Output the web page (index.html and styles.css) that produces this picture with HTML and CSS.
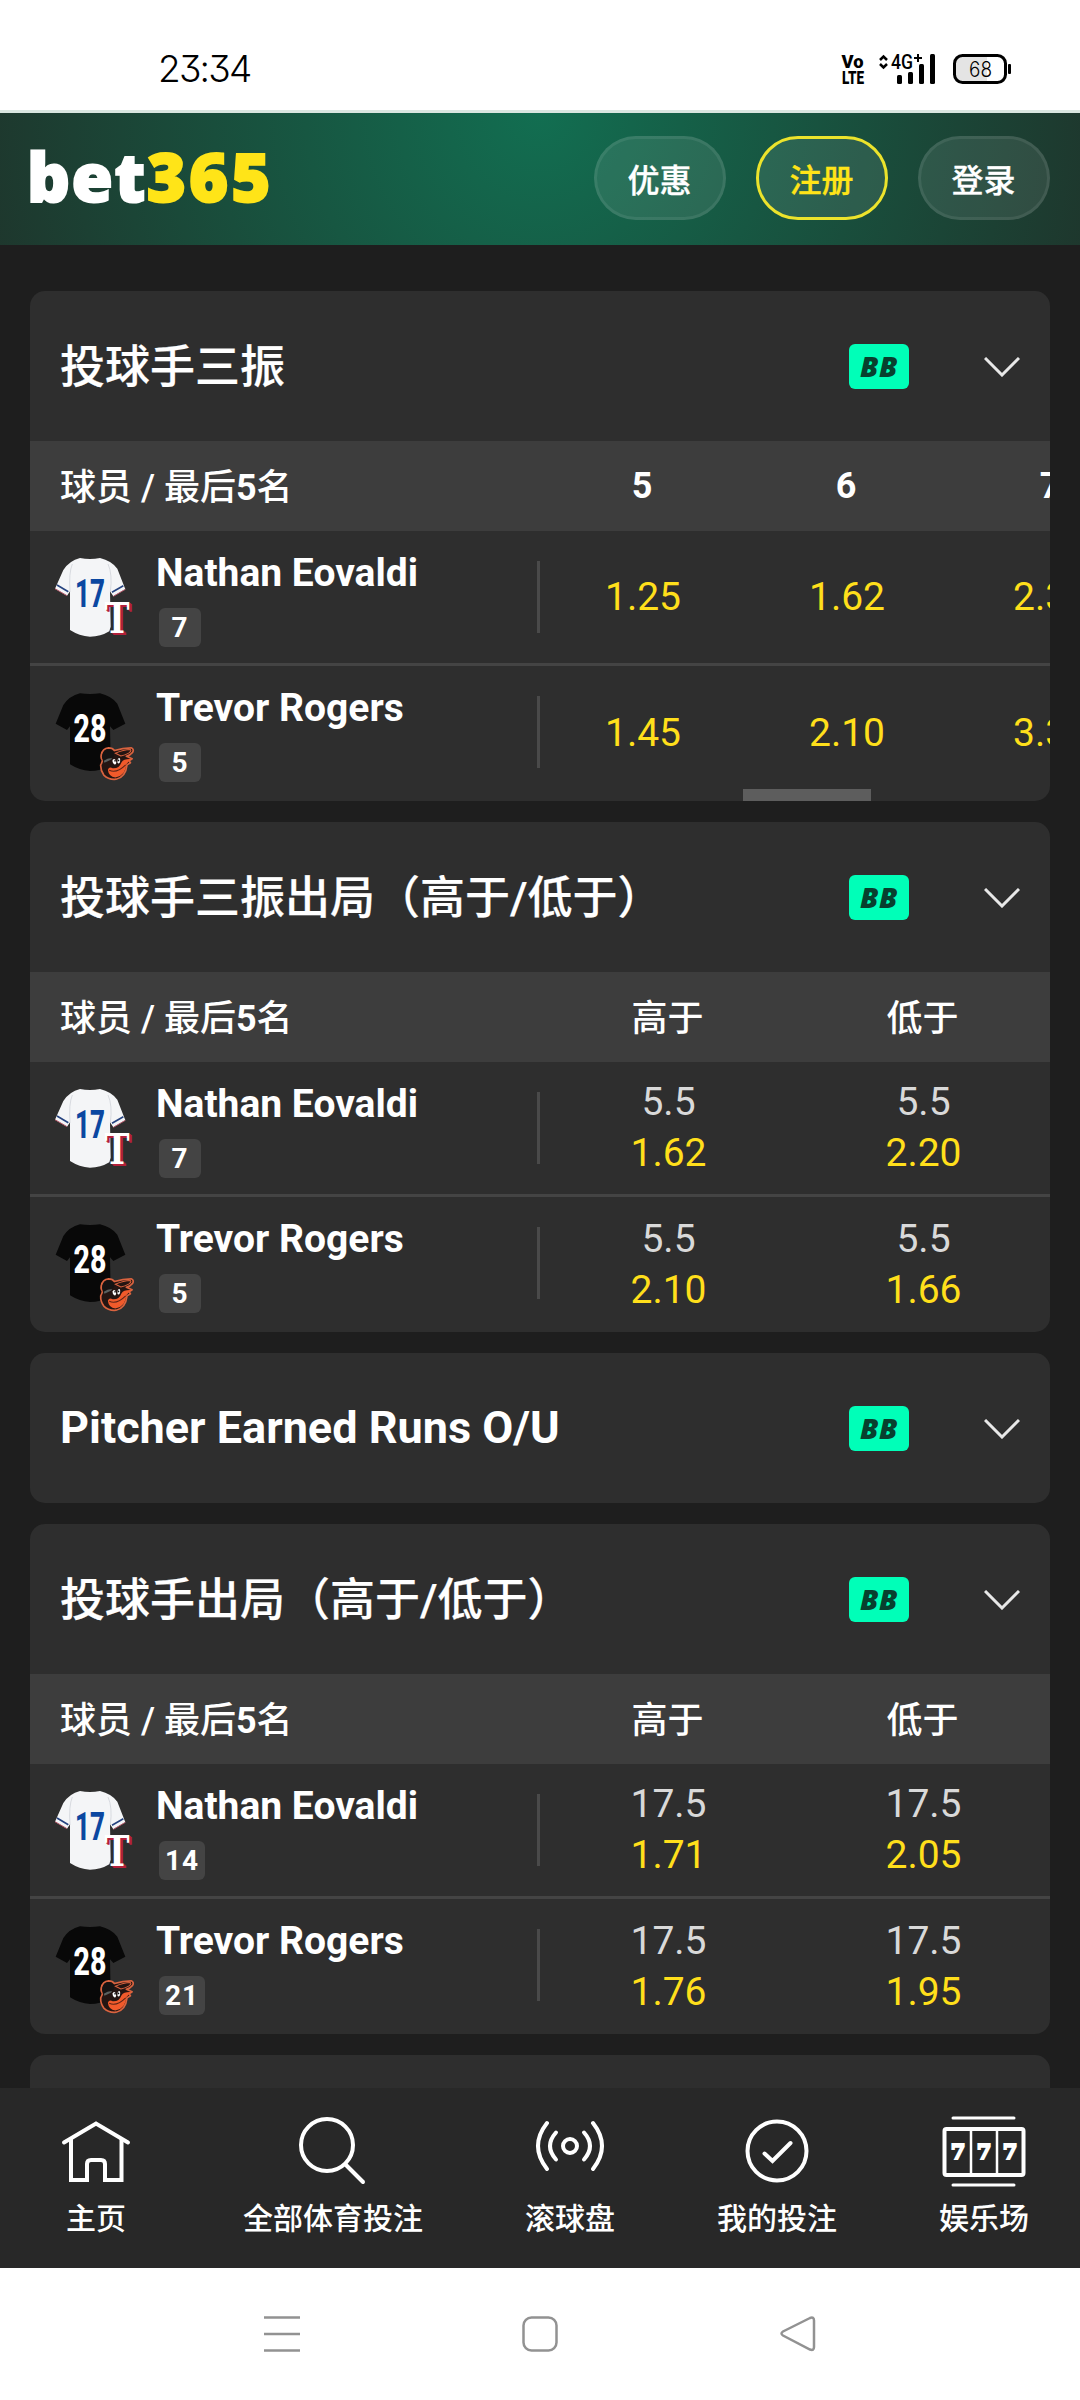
FILE: index.html
```html
<!DOCTYPE html>
<html lang="zh-CN">
<head>
    <meta charset="UTF-8">
    <meta name="viewport" content="width=device-width, initial-scale=1.0">
    <title>bet365</title>
    <link rel="stylesheet" href="styles.css">
</head>
<body>

    <!-- shared icons -->
    <svg class="sprite">
        <symbol id="chevron" viewBox="0 0 36 20">
            <path d="M1 1 L18 18 L35 1" fill="none" stroke="#e8e8e8" stroke-width="3"/>
        </symbol>
        <symbol id="jersey-white" viewBox="0 0 252 252">
            <path d="M78 6 Q108 12 138 6 Q172 14 190 38 L214 100 L178 121 L168 106 L170 212 L166 226 Q140 242 108 242 Q76 240 48 222 L48 106 L39 119 L3 98 L28 42 Q46 14 78 6 Z" fill="#f4f5f7"/>
            <path d="M55 24 Q44 50 48 108 M162 24 Q176 54 169 108" fill="none" stroke="#c9ccd3" stroke-width="2"/>
            <path d="M9 87 L43 107 M208 89 L174 109" stroke="#26437f" stroke-width="5"/>
            <path d="M3 98 L39 119 M214 100 L178 121" stroke="#b5596a" stroke-width="3"/>
        </symbol>
        <symbol id="jersey-black" viewBox="0 0 252 252">
            <path d="M78 7 Q108 11 138 7 Q172 15 190 38 L214 98 L178 117 L168 106 L170 212 L166 226 Q140 240 108 240 Q76 238 48 220 L48 106 L39 117 L5 98 L28 42 Q46 15 78 7 Z" fill="#080808"/>
        </symbol>
        <symbol id="oriole" viewBox="0 0 120 100">
            <path d="M7 24 Q10 6 28 4 Q40 4 45 12 Q70 4 94 4 Q104 8 98 18 Q92 26 80 29 L97 36 L88 42 L92 48 L82 54 Q78 90 50 96 Q28 98 14 84 Q4 70 5 54 Q10 46 10 40 Q4 34 7 24 Z" fill="#241512" stroke="#d9633f" stroke-width="5" stroke-linejoin="round"/>
            <path d="M10 24 Q14 9 28 8 Q40 10 44 18 Q46 26 42 32 Q26 34 12 44 Q8 34 10 24 Z" fill="#151313"/>
            <path d="M48 20 Q72 9 92 9 Q96 13 88 19 Q76 26 64 28 Z" fill="#241512" stroke="#d9633f" stroke-width="3"/>
            <path d="M66 46 Q72 36 94 37 L80 52 Q78 86 48 91 Q28 88 26 68 Q30 58 40 64 Q58 66 66 46 Z" fill="#f15a2b"/>
            <path d="M30 70 Q52 80 78 54" fill="none" stroke="#5c2416" stroke-width="3"/>
            <path d="M14 42 Q24 34 38 34 L36 38 L16 48 Z" fill="#59605f"/>
            <ellipse cx="45" cy="45" rx="5" ry="8" transform="rotate(-18 45 45)" fill="#ffffff"/>
            <ellipse cx="58" cy="42" rx="4" ry="8" transform="rotate(8 58 42)" fill="#ffffff"/>
            <circle cx="47" cy="42" r="2.500" fill="#111111"/>
            <circle cx="57" cy="41" r="2.500" fill="#111111"/>
        </symbol>
    </svg>

    <div class="status-bar">
        <div class="clock">23:34</div>
        <svg class="status-icons" viewBox="0 -6 172 42">
            <text class="volte" x="1.500" y="14" textLength="22" lengthAdjust="spacingAndGlyphs">Vo</text>
            <text class="volte" x="2" y="30" textLength="22" lengthAdjust="spacingAndGlyphs">LTE</text>
            <path d="M40 6 L43.500 2.500 L47 6 M40 10 L43.500 13.500 L47 10" fill="none" stroke="#000" stroke-width="2.500"/>
            <text class="network" x="51" y="15" textLength="22" lengthAdjust="spacingAndGlyphs">4G</text>
            <path d="M74 4 H82 M78 0 V8" stroke="#000" stroke-width="2"/>
            <rect x="57" y="21" width="5" height="9" rx="1.500"/>
            <rect x="68" y="18" width="5" height="12" rx="1.500"/>
            <rect x="79" y="10" width="5" height="20" rx="1.500"/>
            <rect x="90" y="0" width="5" height="30" rx="1.500"/>
            <path d="M121 1.500 H147 V28.500 H121 Q114.500 28.500 114.500 22 V8 Q114.500 1.500 121 1.500 Z" fill="#e4e4e4"/>
            <rect x="114.500" y="1.500" width="51" height="27" rx="8" fill="none" stroke="#000" stroke-width="3"/>
            <rect x="168" y="10" width="3" height="10" rx="1"/>
            <text class="battery-level" x="129" y="22.500" textLength="23" lengthAdjust="spacingAndGlyphs">68</text>
        </svg>
    </div>

    <div class="header">
        <div class="logo"><span class="logo-bet">bet</span><span class="logo-365">365</span></div>
        <div class="header-buttons">
            <div class="pill">优惠</div>
            <div class="pill pill-join">注册</div>
            <div class="pill">登录</div>
        </div>
    </div>

    <div class="markets">

        <div class="market">
            <div class="market-title">
                <div class="market-name">投球手三振</div>
                <div class="bet-builder">BB</div>
                <svg class="chevron"><use href="#chevron"/></svg>
            </div>
            <div class="columns">
                <div class="column-player">球员 / 最后<b>5</b>名</div>
                <div class="column column-narrow"><b>5</b></div>
                <div class="column column-narrow"><b>6</b></div>
                <div class="column column-narrow"><b>7</b></div>
            </div>
            <div class="row">
                <div class="player">
                    <div class="jersey">
                        <svg class="jersey-shirt"><use href="#jersey-white"/></svg>
                        <span class="jersey-number number-blue">17</span>
                        <span class="team-letter">T</span>
                    </div>
                    <div class="player-info">
                        <div class="player-name">Nathan Eovaldi</div>
                        <div class="last-five">7</div>
                    </div>
                </div>
                <div class="cell cell-narrow"><div class="odds">1.25</div></div>
                <div class="cell cell-narrow"><div class="odds">1.62</div></div>
                <div class="cell cell-narrow"><div class="odds">2.30</div></div>
            </div>
            <div class="row">
                <div class="player">
                    <div class="jersey">
                        <svg class="jersey-shirt"><use href="#jersey-black"/></svg>
                        <span class="jersey-number">28</span>
                        <svg class="team-bird"><use href="#oriole"/></svg>
                    </div>
                    <div class="player-info">
                        <div class="player-name">Trevor Rogers</div>
                        <div class="last-five">5</div>
                    </div>
                </div>
                <div class="cell cell-narrow"><div class="odds">1.45</div></div>
                <div class="cell cell-narrow"><div class="odds">2.10</div></div>
                <div class="cell cell-narrow"><div class="odds">3.30</div></div>
            </div>
            <div class="scroll-thumb"></div>
        </div>

        <div class="market">
            <div class="market-title">
                <div class="market-name">投球手三振出局（高于/低于）</div>
                <div class="bet-builder">BB</div>
                <svg class="chevron"><use href="#chevron"/></svg>
            </div>
            <div class="columns">
                <div class="column-player">球员 / 最后<b>5</b>名</div>
                <div class="column">高于</div>
                <div class="column">低于</div>
            </div>
            <div class="row">
                <div class="player">
                    <div class="jersey">
                        <svg class="jersey-shirt"><use href="#jersey-white"/></svg>
                        <span class="jersey-number number-blue">17</span>
                        <span class="team-letter">T</span>
                    </div>
                    <div class="player-info">
                        <div class="player-name">Nathan Eovaldi</div>
                        <div class="last-five">7</div>
                    </div>
                </div>
                <div class="cell"><div class="line">5.5</div><div class="odds">1.62</div></div>
                <div class="cell"><div class="line">5.5</div><div class="odds">2.20</div></div>
            </div>
            <div class="row">
                <div class="player">
                    <div class="jersey">
                        <svg class="jersey-shirt"><use href="#jersey-black"/></svg>
                        <span class="jersey-number">28</span>
                        <svg class="team-bird"><use href="#oriole"/></svg>
                    </div>
                    <div class="player-info">
                        <div class="player-name">Trevor Rogers</div>
                        <div class="last-five">5</div>
                    </div>
                </div>
                <div class="cell"><div class="line">5.5</div><div class="odds">2.10</div></div>
                <div class="cell"><div class="line">5.5</div><div class="odds">1.66</div></div>
            </div>
        </div>

        <div class="market">
            <div class="market-title">
                <div class="market-name market-name-latin">Pitcher Earned Runs O/U</div>
                <div class="bet-builder">BB</div>
                <svg class="chevron"><use href="#chevron"/></svg>
            </div>
        </div>

        <div class="market">
            <div class="market-title">
                <div class="market-name">投球手出局（高于/低于）</div>
                <div class="bet-builder">BB</div>
                <svg class="chevron"><use href="#chevron"/></svg>
            </div>
            <div class="columns">
                <div class="column-player">球员 / 最后<b>5</b>名</div>
                <div class="column">高于</div>
                <div class="column">低于</div>
            </div>
            <div class="row">
                <div class="player">
                    <div class="jersey">
                        <svg class="jersey-shirt"><use href="#jersey-white"/></svg>
                        <span class="jersey-number number-blue">17</span>
                        <span class="team-letter">T</span>
                    </div>
                    <div class="player-info">
                        <div class="player-name">Nathan Eovaldi</div>
                        <div class="last-five">14</div>
                    </div>
                </div>
                <div class="cell"><div class="line">17.5</div><div class="odds">1.71</div></div>
                <div class="cell"><div class="line">17.5</div><div class="odds">2.05</div></div>
            </div>
            <div class="row">
                <div class="player">
                    <div class="jersey">
                        <svg class="jersey-shirt"><use href="#jersey-black"/></svg>
                        <span class="jersey-number">28</span>
                        <svg class="team-bird"><use href="#oriole"/></svg>
                    </div>
                    <div class="player-info">
                        <div class="player-name">Trevor Rogers</div>
                        <div class="last-five">21</div>
                    </div>
                </div>
                <div class="cell"><div class="line">17.5</div><div class="odds">1.76</div></div>
                <div class="cell"><div class="line">17.5</div><div class="odds">1.95</div></div>
            </div>
        </div>

        <div class="market market-next"></div>
    </div>

    <div class="tab-bar">
        <div class="tab">
            <svg class="tab-icon" viewBox="0 0 84 84">
                <path d="M10 33.500 L42 14.500 L74 33.500" stroke-linecap="round"/>
                <path d="M17 30 V71 H33 V55 Q33 51 37 51 H47 Q51 51 51 55 V71 H67.500 V30"/>
            </svg>
            <div class="tab-label">主页</div>
        </div>
        <div class="tab">
            <svg class="tab-icon" viewBox="0 0 84 84">
                <circle cx="36" cy="36" r="26"/>
                <path d="M55 56 L72 73" stroke-linecap="round"/>
            </svg>
            <div class="tab-label">全部体育投注</div>
        </div>
        <div class="tab">
            <svg class="tab-icon" viewBox="0 0 84 84" stroke-linecap="round">
                <circle cx="42" cy="37" r="7"/>
                <path d="M56 23.500 Q68 37 56 50.500 M28 23.500 Q16 37 28 50.500"/>
                <path d="M65 14 Q83 37 65 60 M19 14 Q1 37 19 60"/>
            </svg>
            <div class="tab-label">滚球盘</div>
        </div>
        <div class="tab">
            <svg class="tab-icon" viewBox="0 0 84 84" stroke-linecap="round">
                <circle cx="42" cy="42" r="29.500"/>
                <path d="M29.500 44.500 L37.500 52 L55.500 34"/>
            </svg>
            <div class="tab-label">我的投注</div>
        </div>
        <div class="tab">
            <svg class="tab-icon" viewBox="0 0 84 84">
                <rect x="2.500" y="20" width="79" height="46" rx="2"/>
                <path d="M29 20 V66 M55 20 V66" stroke-width="2.500"/>
                <path d="M11 9 H72 M11 76 H72" stroke-width="3" stroke-linecap="round"/>
                <text class="slot-seven" x="16" y="50">7</text>
                <text class="slot-seven" x="42" y="50">7</text>
                <text class="slot-seven" x="68" y="50">7</text>
            </svg>
            <div class="tab-label">娱乐场</div>
        </div>
    </div>

    <div class="system-nav">
        <svg class="nav-icon" viewBox="0 0 36 36"><path d="M0 1.500 H36 M0 18 H36 M0 34.500 H36"/></svg>
        <svg class="nav-icon" viewBox="0 0 36 36"><rect x="1.500" y="1.500" width="33" height="33" rx="8"/></svg>
        <svg class="nav-icon" viewBox="0 0 36 36"><path d="M30 2 L3 15.500 Q0 17.500 3 19.500 L30 33.500 Q34 35 34 31 V4.500 Q34 0.500 30 2 Z"/></svg>
    </div>

</body>
</html>
```
FILE: styles.css
```css
body {
    margin: 0;
    width: 1080px;
    height: 2400px;
    overflow: hidden;
    display: flex;
    flex-direction: column;
    background-color: #1e1e1e;
    color: #ffffff;
    font-family: Roboto, "Noto Sans CJK SC", sans-serif;
    font-weight: 500;
}

.sprite {
    position: absolute;
    width: 0;
    height: 0;
}

/* status bar */
.status-bar {
    height: 110px;
    box-sizing: border-box;
    padding: 48px 68px 0 158px;
    display: flex;
    justify-content: space-between;
    align-items: flex-start;
    background-color: #ffffff;
    color: #000000;
}

.clock {
    font-family: Inter, sans-serif;
    font-feature-settings: "cv09";
    font-size: 37px;
    font-weight: 350;
    line-height: 41px;
    letter-spacing: -1.8px;
}

.status-icons {
    width: 172px;
    height: 42px;
}

.volte {
    font-family: Roboto, sans-serif;
    font-size: 19px;
    font-weight: 900;
}

.network {
    font-family: Roboto, sans-serif;
    font-size: 20px;
    font-weight: 500;
}

.battery-level {
    font-family: Inter, sans-serif;
    font-size: 21px;
    font-weight: 300;
}

/* header */
.header {
    height: 135px;
    box-sizing: border-box;
    border-top: 3px solid #d9e6e0;
    padding: 0 30px 3px;
    display: flex;
    justify-content: space-between;
    align-items: center;
    background: radial-gradient(circle 560px at 540px 0, #126e51, #1e372d) padding-box;
}

.logo {
    margin-left: -3px;
    padding-bottom: 3px;
    font-family: "Open Sans", sans-serif;
    font-size: 67px;
    font-weight: 800;
    line-height: 90px;
    letter-spacing: 1.5px;
    -webkit-text-stroke: 2px;
}

.logo-365 {
    color: #ffe418;
    letter-spacing: 3px;
}

.header-buttons {
    display: flex;
    gap: 30px;
}

.pill {
    width: 132px;
    height: 84px;
    box-sizing: border-box;
    border: 3px solid rgba(255, 255, 255, 0.08);
    border-radius: 42px;
    background-color: rgba(255, 255, 255, 0.09);
    display: flex;
    justify-content: center;
    align-items: center;
    font-size: 32px;
    padding: 1px 1px 0 0;
    -webkit-text-stroke: 0.3px;
}

.pill-join {
    border-color: #ece32c;
    color: #ffe418;
}

/* markets */
.markets {
    height: 1797px;
    padding: 46px 30px 0;
    display: flex;
    flex-direction: column;
    gap: 21px;
    overflow: hidden;
}

.market {
    position: relative;
    flex-shrink: 0;
    border-radius: 15px;
    background-color: #2e2e2e;
    overflow: hidden;
}

.market-next {
    height: 150px;
}

.market-title {
    height: 150px;
    padding: 0 30px;
    display: flex;
    align-items: center;
}

.market-name {
    flex: 1;
    padding-bottom: 6px;
    font-size: 45px;
    white-space: nowrap;
    -webkit-text-stroke: 0.2px;
}

.market-name-latin {
    padding-bottom: 2px;
    font-weight: 700;
    -webkit-text-stroke: 0;
}

.bet-builder {
    width: 60px;
    height: 45px;
    margin-right: 75px;
    border-radius: 6px;
    background-color: #00ffb8;
    color: #07402e;
    font-family: "Open Sans", sans-serif;
    font-size: 29px;
    font-style: italic;
    font-weight: 800;
    line-height: 43px;
    letter-spacing: 0.5px;
    text-align: center;
}

.chevron {
    width: 36px;
    height: 20px;
    margin-top: 2px;
}

.columns {
    height: 90px;
    display: flex;
    align-items: center;
    background-color: #3d3d3d;
    font-size: 36px;
}

.column-player {
    width: 480px;
    padding: 0 0 4px 30px;
    flex-shrink: 0;
}

.column {
    width: 255px;
    padding-bottom: 5px;
    flex-shrink: 0;
    text-align: center;
}

.column-narrow {
    width: 204px;
    padding-bottom: 0;
}

.row {
    height: 135px;
    box-sizing: border-box;
    border-bottom: 3px solid #444444;
    display: flex;
}

.columns + .row + .row {
    border-bottom: none;
}

.player {
    width: 511px;
    height: 100%;
    box-sizing: border-box;
    padding: 20px 0 0 24px;
    display: flex;
    flex-shrink: 0;
    background: linear-gradient(#4a4a4a, #4a4a4a) no-repeat 507px 30px / 3px 72px;
}

.jersey {
    position: relative;
    width: 84px;
    height: 84px;
    margin-top: 5px;
}

.jersey-shirt {
    display: block;
    width: 84px;
    height: 84px;
}

/* number and club badge sit on top of the shirt */
.jersey-number {
    position: absolute;
    left: 6px;
    top: 18px;
    width: 60px;
    font-size: 38px;
    font-weight: 800;
    line-height: 40px;
    text-align: center;
    transform: scaleX(0.75);
}

.number-blue {
    color: #0b47a1;
    transform: scaleX(0.68);
}

.team-letter {
    position: absolute;
    left: 43px;
    top: 42px;
    width: 40px;
    font-family: "DejaVu Serif", serif;
    font-size: 42px;
    font-weight: 700;
    line-height: 42px;
    text-align: center;
    text-shadow: 2px 1px 0 #b3203a, 3px 2px 0 #b3203a;
    transform: scaleX(0.8);
}

.team-bird {
    position: absolute;
    left: 45px;
    top: 55px;
    width: 41px;
    height: 35px;
}

.player-info {
    margin-left: 18px;
}

.player-name {
    font-size: 39px;
    font-weight: 700;
    line-height: 45px;
}

.last-five {
    display: inline-block;
    min-width: 42px;
    height: 39px;
    box-sizing: border-box;
    margin: 12px 0 0 3px;
    padding: 0 6px;
    border-radius: 6px;
    background-color: #444444;
    font-size: 28px;
    font-weight: 700;
    line-height: 39px;
    letter-spacing: 1px;
    text-align: center;
}

.cell {
    width: 255px;
    display: flex;
    flex-direction: column;
    flex-shrink: 0;
    justify-content: center;
    align-items: center;
    font-size: 39px;
    font-weight: 400;
    line-height: 51px;
}

.cell-narrow {
    width: 204px;
}

.line {
    color: #d9d9d9;
}

.odds {
    color: #ffdf1b;
}

.scroll-thumb {
    position: absolute;
    left: 713px;
    bottom: 0;
    width: 128px;
    height: 12px;
    background-color: #5d5d5d;
}

/* bottom tabs */
.tab-bar {
    height: 180px;
    flex-shrink: 0;
    display: flex;
    justify-content: space-around;
    background-color: #282828;
}

.tab {
    min-width: 90px;
    padding-top: 21px;
    display: flex;
    flex-direction: column;
    align-items: center;
}

.tab-icon {
    width: 84px;
    height: 84px;
    fill: none;
    stroke: #ffffff;
    stroke-width: 4;
}

.tab-label {
    margin-top: 3px;
    font-size: 30px;
    line-height: 45px;
}

.slot-seven {
    font-family: "DejaVu Serif", serif;
    font-size: 21px;
    font-weight: 700;
    text-anchor: middle;
    fill: #ffffff;
    stroke: #ffffff;
    stroke-width: 2;
}

/* android navigation */
.system-nav {
    height: 132px;
    flex-shrink: 0;
    display: flex;
    justify-content: center;
    align-items: center;
    gap: 222px;
    background-color: #ffffff;
}

.nav-icon {
    width: 36px;
    height: 36px;
    fill: none;
    stroke: #929292;
    stroke-width: 2.5;
}
```
